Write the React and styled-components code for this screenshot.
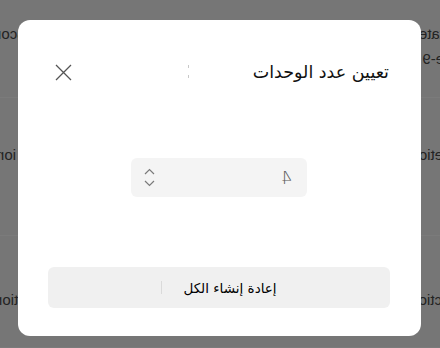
import React from "react";
import styled, { createGlobalStyle } from "styled-components";

const Global = createGlobalStyle`
  html, body { margin: 0; padding: 0; }
  body { font-family: "DejaVu Sans", "Noto Sans", sans-serif; overflow: hidden; }
`;

const Page = styled.div`
  position: relative;
  width: 440px;
  height: 348px;
  overflow: hidden;
  background: #767676;
`;

const Backdrop = styled.div`
  display: flex;
  flex-direction: column;
  transform: scaleX(-1);
  width: 440px;
  height: 348px;
  font-family: "Liberation Sans", Arial, sans-serif;
  font-size: 15px;
  color: #232323;
`;

const BgRow = styled.div`
  height: ${(p) => p.$h}px;
  border-bottom: 1px solid #7b7b7b;
  display: flex;
  justify-content: space-between;
  align-items: flex-start;
  padding-top: ${(p) => p.$pt || 0}px;
  box-sizing: border-box;
`;

const BgCell = styled.div`
  display: flex;
  flex-direction: column;
  gap: 8px;
  margin: ${(p) => p.$m || "0"};
  white-space: nowrap;
`;

const Dialog = styled.div`
  position: absolute;
  left: 18px;
  top: 20px;
  width: 403px;
  height: 316px;
  background: #ffffff;
  border-radius: 12px;
  box-sizing: border-box;
  padding: 36px 31px 28px 30px;
  display: flex;
  flex-direction: column;
  direction: rtl;
`;

const Header = styled.div`
  height: 32px;
  display: flex;
  align-items: center;
  justify-content: space-between;
  padding-right: 1px;
`;

const Title = styled.h2`
  margin: 0;
  font-family: "DejaVu Sans", sans-serif;
  font-weight: normal;
  font-size: 17.5px;
  color: #111;
  display: flex;
  align-items: center;
  gap: 64px;
`;

const Caret = styled.span`
  width: 1px;
  height: 14px;
  background: repeating-linear-gradient(#c8c8c8 0 3px, transparent 3px 10px);
`;

const Close = styled.button`
  border: 0;
  background: none;
  padding: 0;
  margin-left: 6px;
  width: 18px;
  height: 18px;
  display: flex;
  align-items: center;
  justify-content: center;
  cursor: pointer;
`;

const Body = styled.div`
  flex: 1;
  display: flex;
  align-items: center;
  justify-content: center;
`;

const NumberBox = styled.div`
  width: 176px;
  height: 39px;
  background: #f4f4f4;
  border-radius: 6px;
  display: flex;
  align-items: center;
  justify-content: space-between;
  padding: 0 15px 0 13px;
  box-sizing: border-box;
  direction: rtl;
`;

const Value = styled.span`
  font-family: "DejaVu Sans", sans-serif;
  font-size: 17px;
  font-weight: 300;
  color: #5a5a5a;
  transform: scaleX(-1);
  display: inline-block;
`;

const Spinner = styled.div`
  display: flex;
  flex-direction: column;
  gap: 5px;
`;

const Action = styled.button`
  height: 41px;
  border: 0;
  border-radius: 6px;
  background: #f0f0f0;
  display: flex;
  align-items: center;
  justify-content: center;
  gap: 21px;
  direction: rtl;
  font-family: "DejaVu Sans", sans-serif;
  font-size: 13.5px;
  font-weight: 500;
  color: #000;
  cursor: pointer;
`;

const IconStub = styled.span`
  width: 1px;
  height: 13px;
  background: #dadada;
`;

const Chevron = ({ up }) => (
  <svg width="11" height="7" viewBox="0 0 11 7">
    <path
      d={up ? "M1 6 L5.5 1.5 L10 6" : "M1 1 L5.5 5.5 L10 1"}
      fill="none"
      stroke="#7a7a7a"
      strokeWidth="1.2"
    />
  </svg>
);

export default function App() {
  return (
    <>
      <Global />
      <Page>
        <Backdrop>
          <BgRow $h={98} $pt={25}>
            <BgCell $m="0 0 0 -4px">
              <span>tate</span>
              <span>e-9</span>
            </BgCell>
            <BgCell $m="0 -12px 0 0">
              <span>Score</span>
            </BgCell>
          </BgRow>
          <BgRow $h={138} $pt={48}>
            <BgCell $m="0 0 0 -3px">
              <span>etio</span>
            </BgCell>
            <BgCell $m="0 -4px 0 0">
              <span>ion</span>
            </BgCell>
          </BgRow>
          <BgRow $h={112} $pt={55}>
            <BgCell $m="0 0 0 -2px">
              <span>ctio</span>
            </BgCell>
            <BgCell $m="0 -6px 0 0">
              <span>ction</span>
            </BgCell>
          </BgRow>
        </Backdrop>
        <Dialog role="dialog">
          <Header>
            <Title>
              <span>تعيين عدد الوحدات</span>
              <Caret />
            </Title>
            <Close aria-label="close">
              <svg width="17" height="17" viewBox="0 0 17 17">
                <path d="M1 1 L16 16 M16 1 L1 16" stroke="#555" strokeWidth="1.3" fill="none" />
              </svg>
            </Close>
          </Header>
          <Body>
            <NumberBox>
              <Value>4</Value>
              <Spinner>
                <Chevron up />
                <Chevron />
              </Spinner>
            </NumberBox>
          </Body>
          <Action>
            <span>إعادة إنشاء الكل</span>
            <IconStub />
          </Action>
        </Dialog>
      </Page>
    </>
  );
}
